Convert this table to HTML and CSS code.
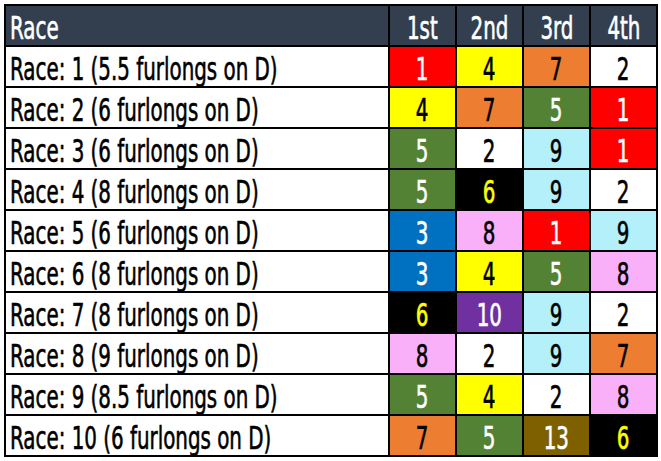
FILE: index.html
```html
<!DOCTYPE html>
<html>
<head>
<meta charset="utf-8">
<link rel="stylesheet" href="styles.css">
</head>
<body>
<div class="sheet">
  <div class="c hd race"><span class="t">Race</span></div>
  <div class="c hd"><span class="t">1st</span></div>
  <div class="c hd"><span class="t">2nd</span></div>
  <div class="c hd"><span class="t">3rd</span></div>
  <div class="c hd"><span class="t">4th</span></div>

  <div class="c race"><span class="t">Race: 1 (5.5 furlongs on D)</span></div>
  <div class="c red"><span class="t">1</span></div>
  <div class="c yellow"><span class="t">4</span></div>
  <div class="c orange"><span class="t">7</span></div>
  <div class="c white"><span class="t">2</span></div>

  <div class="c race"><span class="t">Race: 2 (6 furlongs on D)</span></div>
  <div class="c yellow"><span class="t">4</span></div>
  <div class="c orange"><span class="t">7</span></div>
  <div class="c green"><span class="t">5</span></div>
  <div class="c red"><span class="t">1</span></div>

  <div class="c race"><span class="t">Race: 3 (6 furlongs on D)</span></div>
  <div class="c green"><span class="t">5</span></div>
  <div class="c white"><span class="t">2</span></div>
  <div class="c cyan"><span class="t">9</span></div>
  <div class="c red"><span class="t">1</span></div>

  <div class="c race"><span class="t">Race: 4 (8 furlongs on D)</span></div>
  <div class="c green"><span class="t">5</span></div>
  <div class="c black"><span class="t">6</span></div>
  <div class="c cyan"><span class="t">9</span></div>
  <div class="c white"><span class="t">2</span></div>

  <div class="c race"><span class="t">Race: 5 (6 furlongs on D)</span></div>
  <div class="c blue"><span class="t">3</span></div>
  <div class="c pink"><span class="t">8</span></div>
  <div class="c red"><span class="t">1</span></div>
  <div class="c cyan"><span class="t">9</span></div>

  <div class="c race"><span class="t">Race: 6 (8 furlongs on D)</span></div>
  <div class="c blue"><span class="t">3</span></div>
  <div class="c yellow"><span class="t">4</span></div>
  <div class="c green"><span class="t">5</span></div>
  <div class="c pink"><span class="t">8</span></div>

  <div class="c race"><span class="t">Race: 7 (8 furlongs on D)</span></div>
  <div class="c black"><span class="t">6</span></div>
  <div class="c purple"><span class="t">10</span></div>
  <div class="c cyan"><span class="t">9</span></div>
  <div class="c white"><span class="t">2</span></div>

  <div class="c race"><span class="t">Race: 8 (9 furlongs on D)</span></div>
  <div class="c pink"><span class="t">8</span></div>
  <div class="c white"><span class="t">2</span></div>
  <div class="c cyan"><span class="t">9</span></div>
  <div class="c orange"><span class="t">7</span></div>

  <div class="c race"><span class="t">Race: 9 (8.5 furlongs on D)</span></div>
  <div class="c green"><span class="t">5</span></div>
  <div class="c yellow"><span class="t">4</span></div>
  <div class="c white"><span class="t">2</span></div>
  <div class="c pink"><span class="t">8</span></div>

  <div class="c race"><span class="t">Race: 10 (6 furlongs on D)</span></div>
  <div class="c orange"><span class="t">7</span></div>
  <div class="c green"><span class="t">5</span></div>
  <div class="c brown"><span class="t">13</span></div>
  <div class="c black"><span class="t">6</span></div>
</div>
</body>
</html>
```

FILE: styles.css
```css
html, body {
  margin: 0;
  padding: 0;
  background: #ffffff;
}
body {
  padding: 4px 0 0 4px;
}
.sheet {
  display: grid;
  grid-template-columns: 382px repeat(4, 65px);
  grid-auto-rows: 39px;
  gap: 2px;
  padding: 2px;
  background: #000;
  width: max-content;
  font-family: "DejaVu Sans", sans-serif;
  font-stretch: condensed;
  font-size: 32px;
}
.c {
  display: flex;
  align-items: center;
  justify-content: center;
  background: #fff;
  color: #000;
  overflow: hidden;
  line-height: 1;
}
.t {
  display: inline-block;
  transform: scaleX(0.69);
  white-space: nowrap;
  padding-top: 4px;
  -webkit-text-stroke: 0.6px currentColor;
}
.race {
  justify-content: flex-start;
  padding-left: 4px;
}
.race .t {
  transform-origin: left center;
}
.hd {
  background: #333f4f;
  color: #fff;
}
.red { background: #ff0000; color: #fff; }
.yellow { background: #ffff00; color: #000; }
.orange { background: #ed7d31; color: #000; }
.white { background: #ffffff; color: #000; }
.green { background: #548235; color: #fff; }
.cyan { background: #b4f0fa; color: #000; }
.black { background: #000000; color: #ffff00; }
.blue { background: #0070c0; color: #fff; }
.pink { background: #f9b0f9; color: #000; }
.purple { background: #7030a0; color: #fff; }
.brown { background: #7f6000; color: #fff; }
```
